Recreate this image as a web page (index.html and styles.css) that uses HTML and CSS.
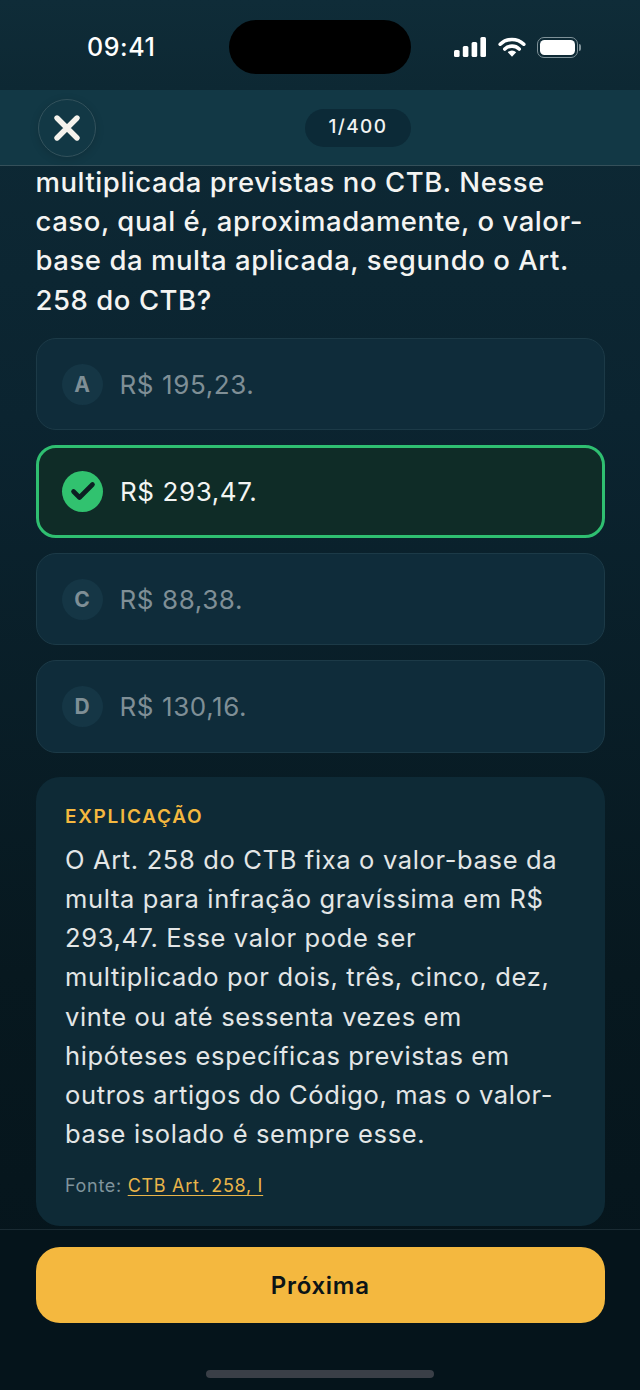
FILE: index.html
```html
<!DOCTYPE html>
<html lang="pt-BR">
<head>
<meta charset="utf-8">
<title>Quiz</title>
<link rel="stylesheet" href="styles.css">
</head>
<body>
<div class="phone">
  <div class="status">
    <span class="time">09:41</span>
    <div class="island"></div>
    <div class="status-icons">
      <svg class="signal" width="32" height="20" viewBox="0 0 32 20"><rect x="0" y="13" width="5.6" height="7" rx="1.5"/><rect x="8.8" y="9" width="5.6" height="11" rx="1.5"/><rect x="17.6" y="5" width="5.6" height="15" rx="1.5"/><rect x="26.4" y="0" width="5.6" height="20" rx="1.5"/></svg>
      <svg class="wifi" width="28" height="20" viewBox="0 0 28 20"><path d="M2.2 7.2a17 17 0 0 1 23.6 0M6.8 12a10.4 10.4 0 0 1 14.4 0" fill="none" stroke="#fff" stroke-width="3.6" stroke-linecap="round"/><path d="M9.8 15.2a6 6 0 0 1 8.4 0L14 19.8Z" fill="#fff"/></svg>
      <div class="battery"><div class="battery-fill"></div></div>
      <div class="battery-tip"></div>
    </div>
  </div>
  <header class="topbar">
    <button class="close" aria-label="Fechar">
      <svg width="28" height="28" viewBox="0 0 28 28"><path d="M4 4L24 24M24 4L4 24" stroke="#f5f2ec" stroke-width="5.4" stroke-linecap="round"/></svg>
    </button>
    <div class="counter">1/400</div>
  </header>
  <main class="content">
    <p class="question">multiplicada previstas no CTB. Nesse caso, qual é, aproximadamente, o valor-base da multa aplicada, segundo o Art. 258 do CTB?</p>
    <div class="options">
      <div class="option dim"><span class="letter">A</span><span>R$ 195,23.</span></div>
      <div class="option correct">
        <span class="check"><svg width="26" height="26" viewBox="0 0 26 26"><path d="M3.5 12.5L9.5 18.5L22.5 5.5" fill="none" stroke="#0c1f22" stroke-width="4.6" stroke-linecap="round" stroke-linejoin="round"/></svg></span>
        <span>R$ 293,47.</span>
      </div>
      <div class="option dim"><span class="letter">C</span><span>R$ 88,38.</span></div>
      <div class="option dim"><span class="letter">D</span><span>R$ 130,16.</span></div>
    </div>
    <section class="explain">
      <h2 class="explain-title">EXPLICAÇÃO</h2>
      <p class="explain-body">O Art. 258 do CTB fixa o valor-base da multa para infração gravíssima em R$ 293,47. Esse valor pode ser multiplicado por dois, três, cinco, dez, vinte ou até sessenta vezes em hipóteses específicas previstas em outros artigos do Código, mas o valor-base isolado é sempre esse.</p>
      <p class="source">Fonte: <a class="source-link" href="#">CTB Art. 258, I</a></p>
    </section>
  </main>
  <footer class="footer">
    <button class="next">Próxima</button>
    <div class="home"></div>
  </footer>
</div>
</body>
</html>
```

FILE: styles.css
```css
* { box-sizing: border-box; }
html, body { margin: 0; padding: 0; }
body { width: 640px; height: 1390px; overflow: hidden; font-family: Inter, "Liberation Sans", sans-serif; }
.phone {
  width: 640px; height: 1390px; display: flex; flex-direction: column; overflow: hidden;
  background: linear-gradient(180deg, #0e2a36 0%, #0b2430 30%, #07181f 70%, #05141b 100%);
}
.status {
  height: 90px; flex: none; position: relative; display: flex; align-items: center;
  padding: 4px 59px 0 87px; justify-content: space-between;
  background: linear-gradient(180deg, #0f2c38, #0d2833);
}
.time { font-size: 25px; font-weight: 500; color: #fff; letter-spacing: 0.6px; }
.island { position: absolute; left: 229px; top: 20px; width: 182px; height: 54px; border-radius: 27px; background: #000; }
.status-icons { display: flex; align-items: center; }
.signal { fill: #fff; margin-right: 12px; }
.wifi { margin-right: 11px; }
.battery { width: 41px; height: 21px; border: 1.5px solid #7f9299; border-radius: 7px; padding: 2px; }
.battery-fill { width: 100%; height: 100%; background: #fff; border-radius: 4.5px; }
.battery-tip { width: 2px; height: 7px; margin-left: 1.5px; background: #7f9299; border-radius: 0 2px 2px 0; }
.topbar {
  height: 76px; flex: none; position: relative; z-index: 1; display: flex; align-items: center; justify-content: center;
  background: #123845; border-bottom: 1.5px solid #35505a;
}
.close {
  position: absolute; left: 38px; top: 9px; width: 58px; height: 58px; border-radius: 50%;
  background: #123845; border: 1px solid #33525c; padding: 0; display: flex; align-items: center; justify-content: center;
  box-shadow: 0 2px 8px rgba(0,0,0,.15);
}
.counter {
  width: 106px; height: 38px; margin-left: 76px; border-radius: 19px; background: #0c2a37; color: #f1f3f2;
  font-size: 19px; font-weight: 500; letter-spacing: 1.4px; display: flex; align-items: center; justify-content: center;
  padding-bottom: 2px;
}
.content { flex: 1; min-height: 0; overflow: hidden; padding: 0 35px 0 35.5px; }
.question {
  margin: -3px 0 0; font-size: 27.5px; line-height: 39.2px; font-weight: 500; color: #f4f4f2; letter-spacing: 0.55px;
}
.options { display: flex; flex-direction: column; gap: 15px; margin-top: 18px; }
.option {
  height: 92.5px; display: flex; align-items: center; gap: 17px; padding: 0 25px; border-radius: 20px;
  font-size: 26px; letter-spacing: 0.6px;
}
.dim { background: #0f2c3a; border: 1.5px solid #1c3a47; color: #7f8f96; }
.correct { background: #0f2c27; border: 3px solid #2fbf71; color: #f3f5f3; padding: 0 23.5px; }
.letter {
  width: 41px; height: 41px; flex: none; border-radius: 50%; background: #153645; color: #7f8f96;
  font-size: 21px; font-weight: 700; letter-spacing: 0; display: flex; align-items: center; justify-content: center;
}
.check {
  width: 41px; height: 41px; flex: none; border-radius: 50%; background: #31c26f;
  display: flex; align-items: center; justify-content: center;
}
.explain {
  margin-top: 24px; height: 449px; border-radius: 24px; background: #0e2a36; padding: 27px 40px 0 29.5px;
}
.explain-title { margin: 0; font-size: 19px; line-height: 26px; font-weight: 600; color: #f4b83f; letter-spacing: 1.7px; }
.explain-body { margin: 10px 0 0; font-size: 25.5px; line-height: 39.2px; color: #e3e6e6; letter-spacing: 0.65px; }
.source { margin: 20px 0 0; font-size: 18px; line-height: 26px; color: #7f949c; letter-spacing: 0.7px; }
.source-link { color: #e9b54a; text-decoration: underline; text-underline-offset: 3px; }
.footer {
  height: 161px; flex: none; border-top: 1.5px solid #1a2b33; background: #05141b;
  padding: 17px 35px 0 35.5px; display: flex; flex-direction: column; align-items: center;
}
.next {
  width: 100%; height: 76px; flex: none; border: 0; border-radius: 24px; background: #f4b83f; color: #0c1416;
  font-family: inherit; font-size: 24px; font-weight: 600; letter-spacing: 0.7px;
}
.home { width: 228px; height: 8px; margin: 47px 0 0 -1px; border-radius: 4px; background: #3a3f47; flex: none; }
```
